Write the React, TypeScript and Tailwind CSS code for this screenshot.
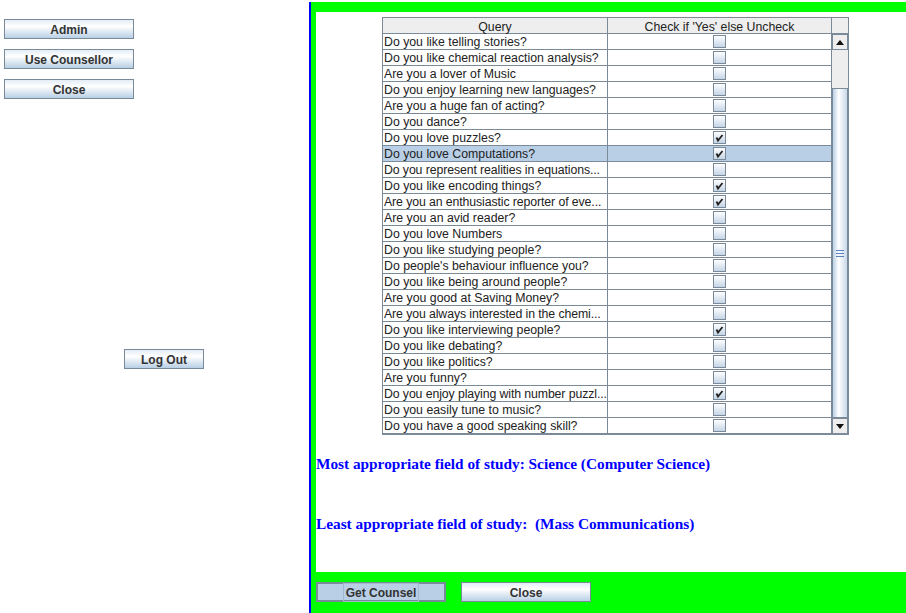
const rows: [string, boolean][] = [
  ["Do you like telling stories?", false],
  ["Do you like chemical reaction analysis?", false],
  ["Are you a lover of Music", false],
  ["Do you enjoy learning new languages?", false],
  ["Are you a huge fan of acting?", false],
  ["Do you dance?", false],
  ["Do you love puzzles?", true],
  ["Do you love Computations?", true],
  ["Do you represent realities in equations...", false],
  ["Do you like encoding things?", true],
  ["Are you an enthusiastic reporter of eve...", true],
  ["Are you an avid reader?", false],
  ["Do you love Numbers", false],
  ["Do you like studying people?", false],
  ["Do people's behaviour influence you?", false],
  ["Do you like being around people?", false],
  ["Are you good at Saving Money?", false],
  ["Are you always interested in the chemi...", false],
  ["Do you like interviewing people?", true],
  ["Do you like debating?", false],
  ["Do you like politics?", false],
  ["Are you funny?", false],
  ["Do you enjoy playing with number puzzl...", true],
  ["Do you easily tune to music?", false],
  ["Do you have a good speaking skill?", false],
];

const SELECTED = 7;

const btn =
  "h-[20px] pt-[2px] border border-[#7a8a99] bg-[linear-gradient(to_bottom,#e3ecf6_0%,#ffffff_35%,#b8cfe5_100%)] text-[12px] font-bold text-[#333] flex items-center justify-center font-['Liberation_Sans',Arial,sans-serif]";

const CheckBox = ({ checked }: { checked: boolean }) => (
  <div className="w-[13px] h-[13px] border border-[#7a8a99] bg-[linear-gradient(to_bottom,#ffffff,#c4d4e6)] flex items-center justify-center">
    {checked && (
      <svg width="11" height="11" viewBox="0 0 11 11">
        <path d="M2.5 5.5 L4 8.5 L8.5 3" fill="none" stroke="#222" strokeWidth="1.8" />
      </svg>
    )}
  </div>
);

const Arrow = ({ up }: { up: boolean }) => (
  <div className="h-[16px] border border-[#7a8a99] bg-[#eeeeee] flex items-center justify-center">
    <svg width="8" height="5" viewBox="0 0 8 5">
      <path d={up ? "M0 5 L4 0 L8 5 Z" : "M0 0 L4 5 L8 0 Z"} fill="#111" />
    </svg>
  </div>
);

export default function App() {
  return (
    <div className="w-[906px] h-[613px] flex bg-white overflow-hidden font-['Liberation_Sans',Arial,sans-serif]">
      {/* Left menu */}
      <div className="w-[309px] shrink-0 pl-[4px] pt-[19px] flex flex-col">
        <button className={`${btn} w-[130px]`}>Admin</button>
        <button className={`${btn} w-[130px] mt-[10px]`}>Use Counsellor</button>
        <button className={`${btn} w-[130px] mt-[10px]`}>Close</button>
        <button className={`${btn} w-[80px] mt-[250px] ml-[120px]`}>Log Out</button>
      </div>

      {/* Counsel panel */}
      <div className="flex-1 mt-[2px] border-l-2 border-[#0000ff] bg-[#00ff00] pl-[5px] pt-[10px] flex flex-col">
        <div className="h-[560px] bg-white pt-[5px]">
          <div className="ml-[66px] w-[467px] border border-[#7a8a99] text-[12.3px] text-[#222]">
            <div className="flex h-[16px] bg-[#eeeeee] border-b border-[#7a8a99] leading-[18px]">
              <div className="w-[225px] border-r border-[#7a8a99] text-center">Query</div>
              <div className="w-[224px] border-r border-[#7a8a99] text-center">Check if 'Yes' else Uncheck</div>
              <div className="flex-1" />
            </div>
            <div className="flex">
              <div className="w-[449px]">
                {rows.map(([q, c], i) => (
                  <div
                    key={i}
                    className={`flex h-[16px] border-b border-[#7a8a99] ${i === SELECTED ? "bg-[#b8cfe5]" : ""}`}
                  >
                    <div
                      className={`w-[225px] border-r border-[#7a8a99] pl-[1px] leading-[17px] whitespace-nowrap overflow-hidden ${
                        q.endsWith("...") ? "tracking-[-0.1px]" : ""
                      }`}
                    >
                      {q}
                    </div>
                    <div className="w-[224px] border-r border-[#7a8a99] flex items-center justify-center">
                      <CheckBox checked={c} />
                    </div>
                  </div>
                ))}
              </div>
              <div className="flex-1 flex flex-col bg-[#eeeeee]">
                <Arrow up />
                <div className="h-[38px]" />
                <div className="flex-1 border border-[#7a8a99] bg-[linear-gradient(to_right,#b8cfe5,#ffffff_40%,#c8d8ea)] flex flex-col items-center justify-center gap-[2px]">
                  <div className="w-[8px] h-[1px] bg-[#5b7ec1]" />
                  <div className="w-[8px] h-[1px] bg-[#5b7ec1]" />
                  <div className="w-[8px] h-[1px] bg-[#5b7ec1]" />
                </div>
                <Arrow up={false} />
              </div>
            </div>
          </div>

          <div className="mt-[19px] font-['Liberation_Serif','Times_New_Roman',serif] font-bold text-[15.3px] leading-[20px] text-[#0000ff]">
            <p>Most appropriate field of study: Science (Computer Science)</p>
            <p className="mt-[40px] whitespace-pre">Least appropriate field of study:  (Mass Communications)</p>
          </div>
        </div>

        <div className="flex pt-[10px] gap-[15px]">
          <button className="w-[130px] h-[20px] border-2 border-[#7a8a99] bg-[#b8cfe5] flex items-center justify-center text-[12px] font-bold text-[#333]">
            <span className="border border-[#a3b8d0] px-[2px] pt-[2px] leading-[15px]">Get Counsel</span>
          </button>
          <button className={`${btn} w-[130px]`}>Close</button>
        </div>
      </div>
    </div>
  );
}
